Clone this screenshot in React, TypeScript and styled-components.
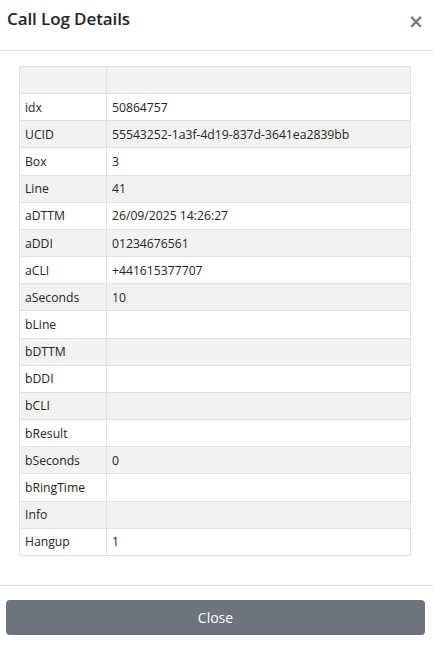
import React from "react";
import styled, { createGlobalStyle } from "styled-components";

const GlobalStyle = createGlobalStyle`
  html, body {
    margin: 0;
    padding: 0;
    background: #fff;
  }
  body {
    font-family: "Open Sans", "Noto Sans", sans-serif;
    color: #212529;
  }
`;

const rows: [string, string][] = [
  ["idx", "50864757"],
  ["UCID", "55543252-1a3f-4d19-837d-3641ea2839bb"],
  ["Box", "3"],
  ["Line", "41"],
  ["aDTTM", "26/09/2025 14:26:27"],
  ["aDDI", "01234676561"],
  ["aCLI", "+441615377707"],
  ["aSeconds", "10"],
  ["bLine", ""],
  ["bDTTM", ""],
  ["bDDI", ""],
  ["bCLI", ""],
  ["bResult", ""],
  ["bSeconds", "0"],
  ["bRingTime", ""],
  ["Info", ""],
  ["Hangup", "1"],
];

const CallLogDetails = () => {
  return (
    <Modal>
      <Header>
        <Title>Call Log Details</Title>
        <CloseX aria-label="Close">×</CloseX>
      </Header>
      <Body>
        <Table>
          <thead>
            <tr>
              <Th />
              <Th />
            </tr>
          </thead>
          <tbody>
            {rows.map(([k, v], i) => (
              <Row key={k} striped={i % 2 === 1}>
                <KeyCell>{k}</KeyCell>
                <Cell>{v}</Cell>
              </Row>
            ))}
          </tbody>
        </Table>
      </Body>
      <Footer>
        <CloseButton>Close</CloseButton>
      </Footer>
    </Modal>
  );
};

export default function App() {
  return (
    <>
      <GlobalStyle />
      <CallLogDetails />
    </>
  );
}

const Modal = styled.div`
  width: 433px;
  height: 650px;
  display: flex;
  flex-direction: column;
  box-sizing: border-box;
`;

const Header = styled.div`
  height: 51px;
  box-sizing: border-box;
  display: flex;
  align-items: flex-start;
  justify-content: space-between;
  padding: 6px 9px 0 7px;
  border-bottom: 1px solid #dee2e6;
`;

const Title = styled.h5`
  margin: 0;
  font-size: 17px;
  font-weight: 600;
  line-height: 26px;
  letter-spacing: -0.1px;
  color: #212529;
`;

const CloseX = styled.span`
  font-size: 19px;
  font-weight: 700;
  line-height: 26px;
  color: #7a7a7a;
  margin-top: 2px;
  font-family: "DejaVu Sans", sans-serif;
`;

const Body = styled.div`
  flex: 1;
  padding: 15px 22px 0 19px;
`;

const Table = styled.table`
  width: 100%;
  border-collapse: collapse;
  font-size: 12.2px;
  color: #212529;
`;

const Th = styled.th`
  height: 26.17px;
  background: #f2f2f2;
  border: 1px solid #dee2e6;
  padding: 0;
  &:first-child {
    width: 86px;
  }
`;

const Row = styled.tr<{ striped: boolean }>`
  background: ${(p) => (p.striped ? "#f2f2f2" : "#fff")};
`;

const Cell = styled.td`
  height: 26.17px;
  padding: 0 5px;
  border: 1px solid #dee2e6;
  vertical-align: middle;
`;

const KeyCell = styled(Cell)`
  width: 76px;
`;

const Footer = styled.div`
  border-top: 1px solid #dee2e6;
  padding: 14px 8px 15px 6px;
`;

const CloseButton = styled.button`
  width: 100%;
  height: 35px;
  border: none;
  border-radius: 4px;
  background: #6c757d;
  color: #fff;
  font-family: "Open Sans", "Noto Sans", sans-serif;
  font-size: 14px;
  cursor: pointer;
`;
